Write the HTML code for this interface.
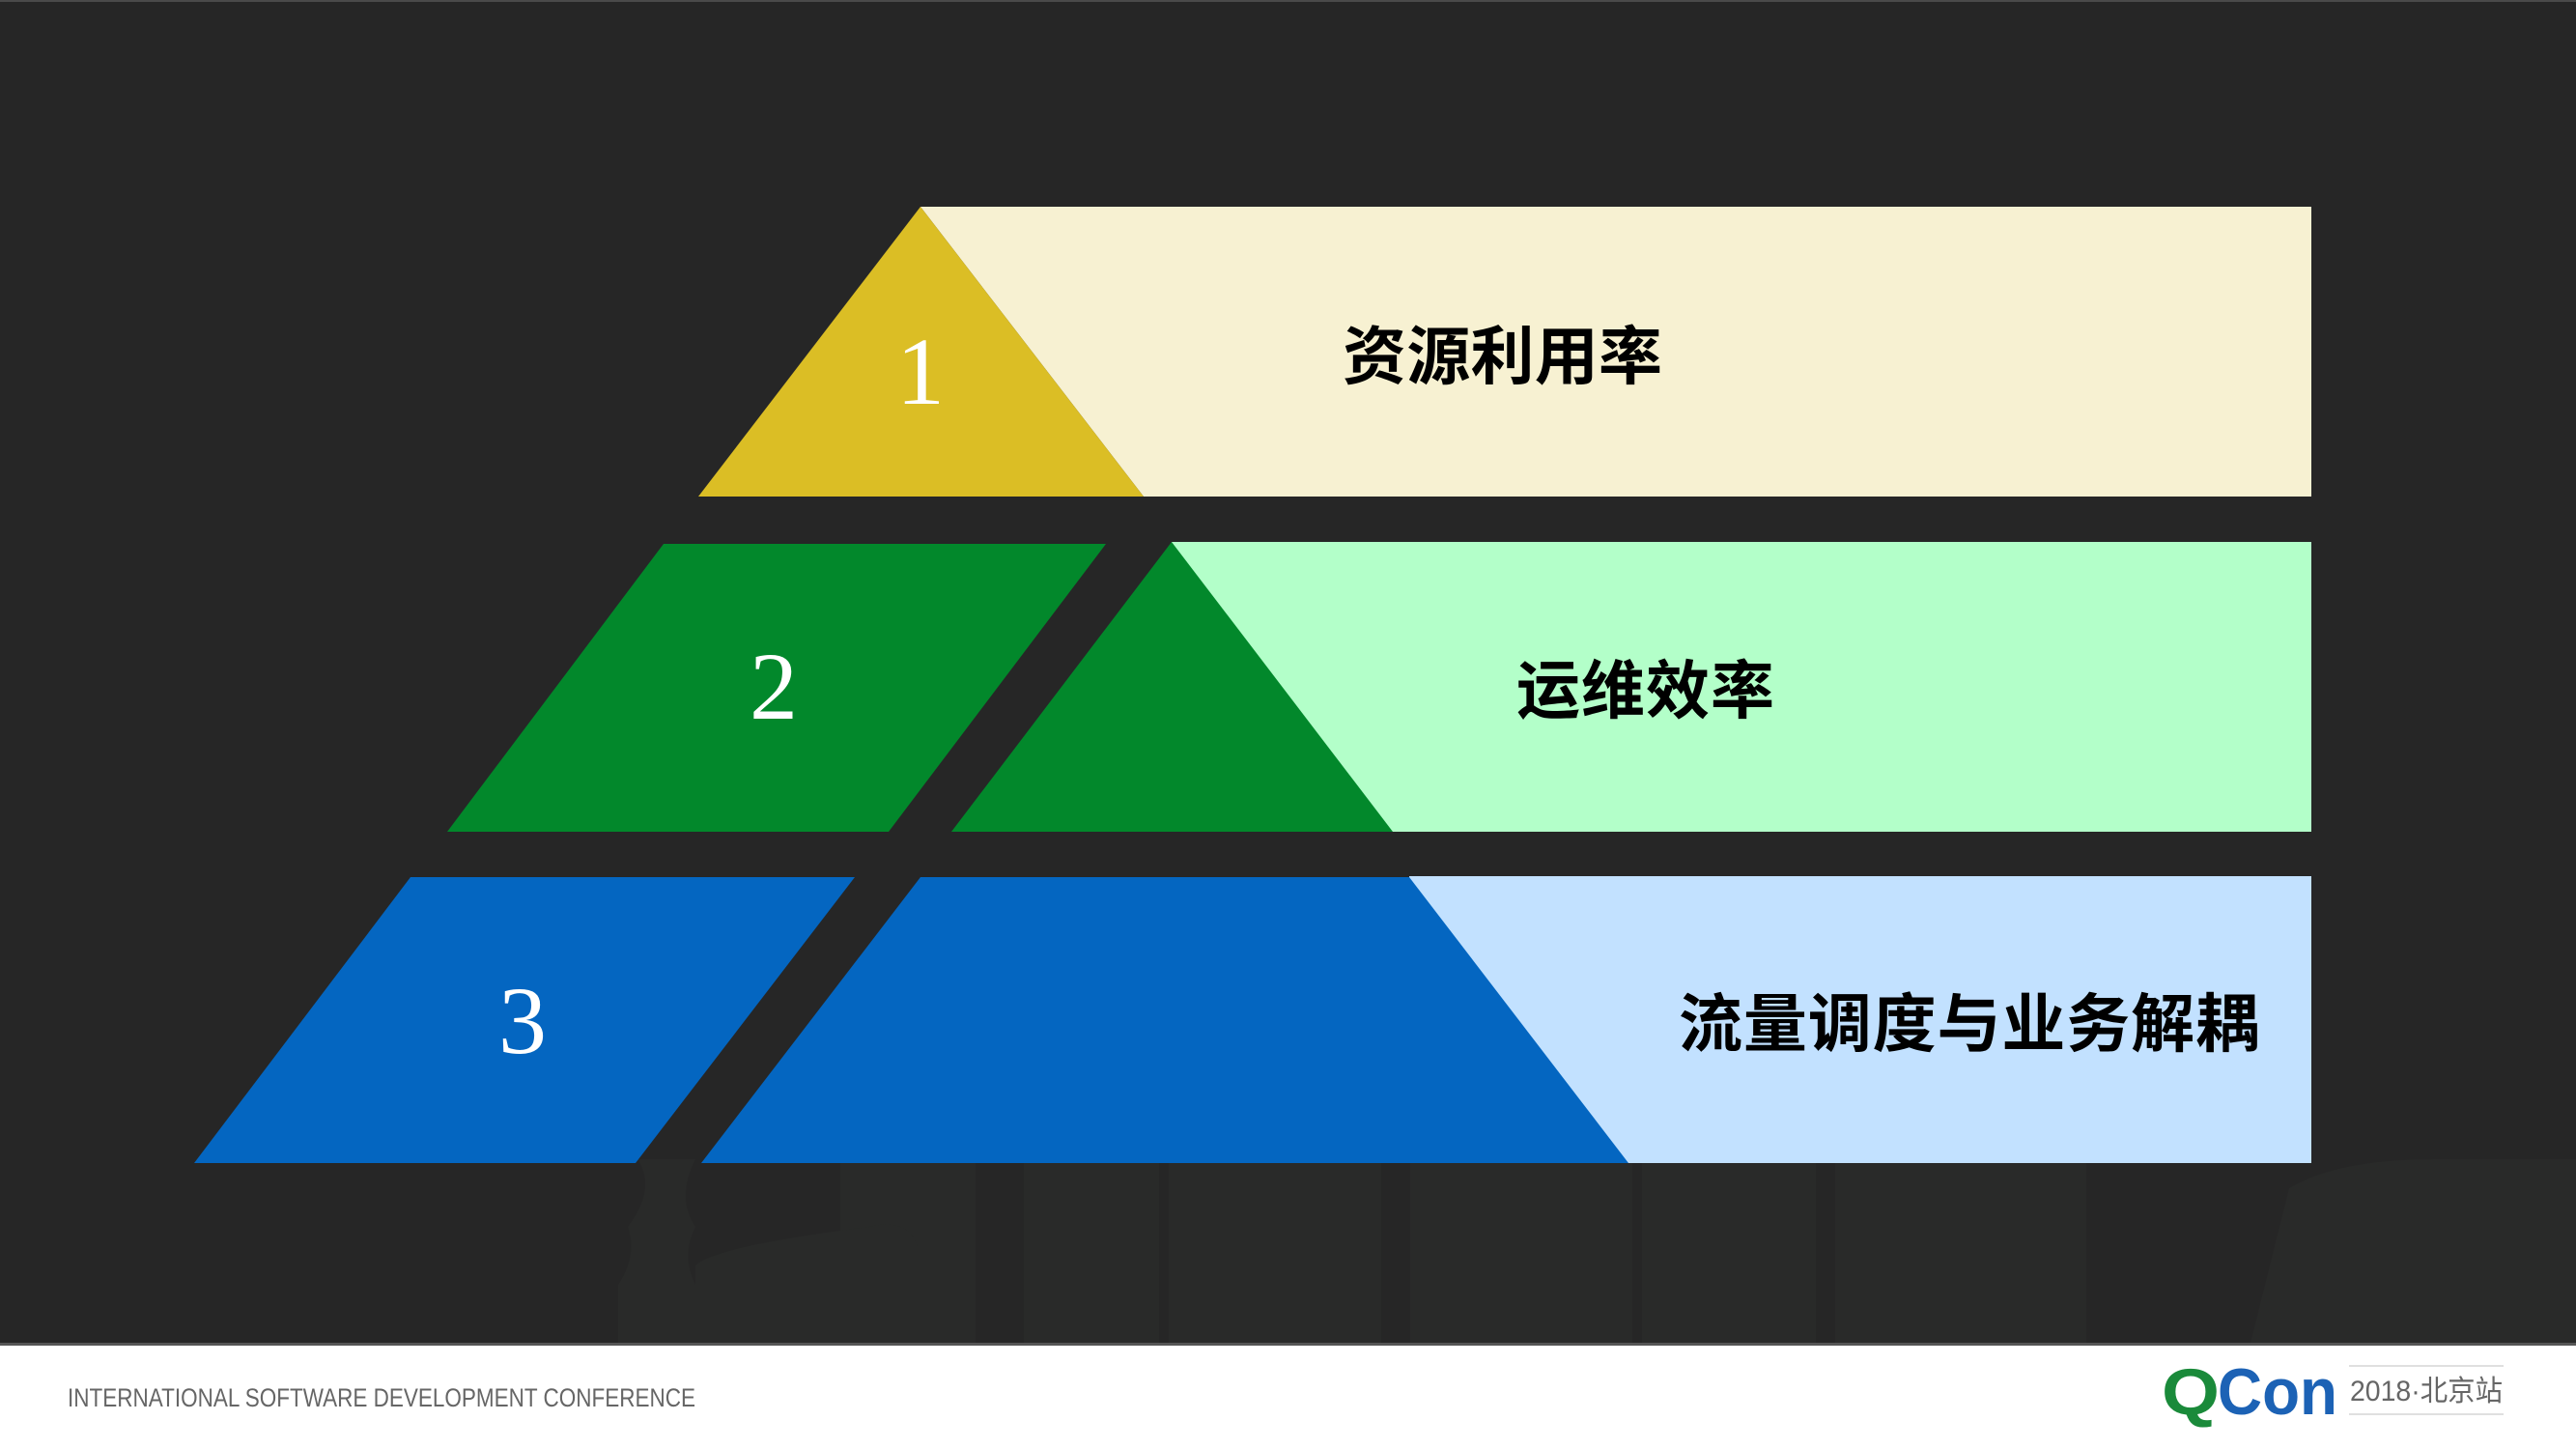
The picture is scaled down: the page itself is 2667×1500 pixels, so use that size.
<!DOCTYPE html>
<html><head><meta charset="utf-8"><style>
html,body{margin:0;padding:0;background:#262626;}
svg{display:block}
</style></head><body>
<svg width="2667" height="1500" viewBox="0 0 2667 1500" xmlns="http://www.w3.org/2000/svg">
<rect width="2667" height="1500" fill="#262626"/>
<rect x="0" y="0" width="2667" height="2" fill="#4a4a4a"/>
<!-- faint skyline -->
<g fill="#292a29">
<path d="M640 1390 L640 1330 Q660 1300 650 1270 Q680 1230 660 1200 L720 1200 Q700 1240 720 1270 Q705 1300 720 1330 L720 1390Z"/>
<rect x="870" y="1204" width="140" height="186"/>
<path d="M720 1390 L720 1310 Q740 1290 900 1270 Q940 1260 950 1290 L950 1390Z"/>
<rect x="1060" y="1204" width="140" height="186"/>
<rect x="1210" y="1204" width="220" height="186"/>
<rect x="1460" y="1204" width="230" height="186"/>
<rect x="1700" y="1204" width="180" height="186"/>
<rect x="1900" y="1204" width="260" height="186"/>
<path d="M2330 1390 L2370 1230 Q2420 1200 2520 1200 L2667 1200 L2667 1390Z"/>
</g>
<!-- row 1 -->
<polygon points="953,214 2393,214 2393,514 1184,514" fill="#F7F1D2"/>
<polygon points="953,214 1184,514 723,514" fill="#DBBE25"/>
<!-- row 2 -->
<rect x="1213" y="561" width="1180" height="300" fill="#B3FFC9"/>
<polygon points="1213,561 1442,861 985,861" fill="#02882B"/>
<polygon points="687,563 1145,563 920,861 463,861" fill="#02882B"/>
<!-- row 3 -->
<rect x="1459" y="907" width="934" height="297" fill="#C2E1FF"/>
<polygon points="953,908 1459,908 1686,1204 726,1204" fill="#0466C1"/>
<polygon points="425,908 885,908 658,1204 201,1204" fill="#0466C1"/>
<!-- numbers -->
<g font-family="Liberation Serif, serif" fill="#fff" font-size="100" text-anchor="middle">
<text x="953" y="418">1</text>
<text x="801" y="744">2</text>
<text x="541" y="1090">3</text>
</g>
<g font-family="Liberation Sans, Noto Sans CJK SC, sans-serif" font-weight="bold" font-size="66" fill="#000">
<text x="1390" y="392" textLength="331">资源利用率</text>
<text x="1570" y="738" textLength="267">运维效率</text>
<text x="1738" y="1083" textLength="601">流量调度与业务解耦</text>
</g>
<!-- footer -->
<rect x="0" y="1392" width="2667" height="108" fill="#fff"/>
<rect x="0" y="1390" width="2667" height="3" fill="#555"/>
<text x="70" y="1456" font-family="Liberation Sans, sans-serif" font-size="27" fill="#666" textLength="650" lengthAdjust="spacingAndGlyphs">INTERNATIONAL SOFTWARE DEVELOPMENT CONFERENCE</text>
<text x="2238" y="1464" font-family="Liberation Sans, sans-serif" font-weight="bold" font-size="68" fill="#1a8a3a" textLength="60" lengthAdjust="spacingAndGlyphs">Q</text>
<text x="2296" y="1464" font-family="Liberation Sans, sans-serif" font-weight="bold" font-size="68" fill="#1c62b5" textLength="124" lengthAdjust="spacingAndGlyphs">Con</text>
<rect x="2432" y="1413" width="160" height="2" fill="#e0e0e0"/>
<rect x="2432" y="1463" width="160" height="2" fill="#e0e0e0"/>
<text x="2433" y="1450" font-family="Liberation Sans, Noto Sans CJK SC, sans-serif" font-size="30" fill="#666" textLength="158" lengthAdjust="spacingAndGlyphs">2018·北京站</text>
</svg>
</body></html>
